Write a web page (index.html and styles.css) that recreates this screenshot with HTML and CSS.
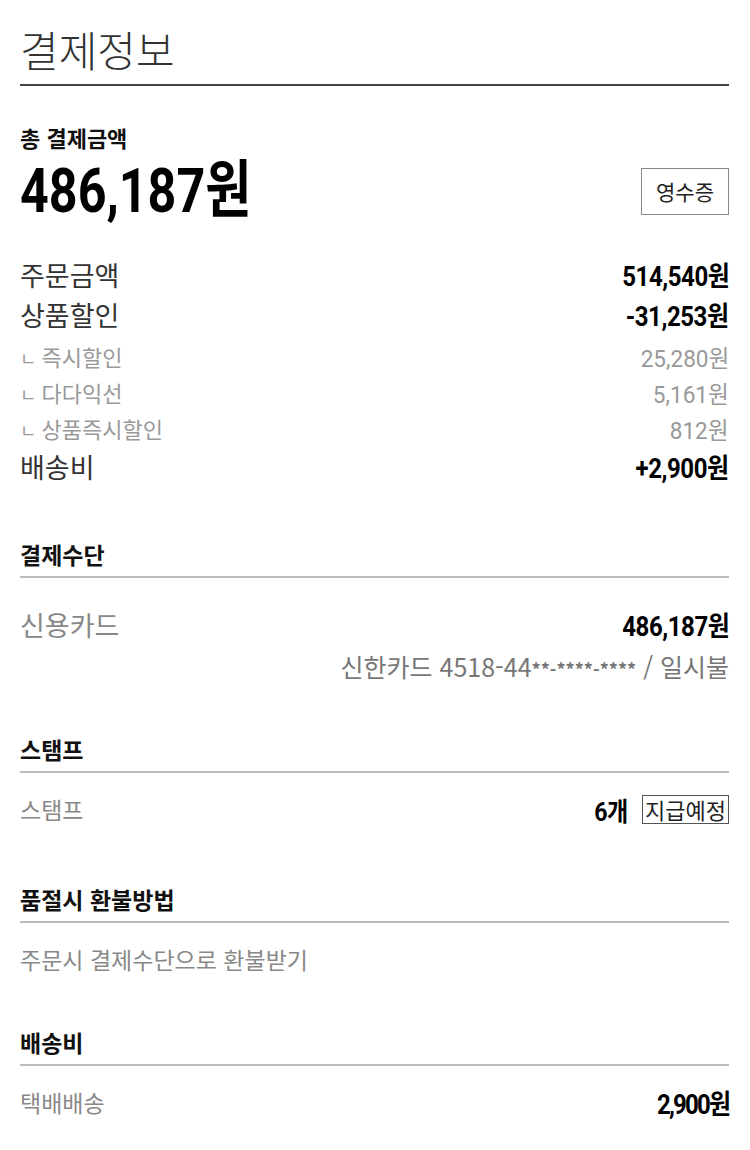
FILE: index.html
```html
<!DOCTYPE html>
<html lang="ko">
<head>
    <meta charset="UTF-8">
    <meta name="viewport" content="width=device-width, initial-scale=1.0">
    <title>결제정보</title>
    <link rel="stylesheet" href="styles.css">
</head>
<body>
    <div class="container">
        <h1 class="page-title">결제정보</h1>

        <div class="total">
            <div class="total-label">총 결제금액</div>
            <div class="total-row">
                <span class="total-amount num">486,187원</span>
                <button class="receipt-btn">영수증</button>
            </div>
        </div>

        <div class="price-list">
            <div class="price-row">
                <span>주문금액</span>
                <span class="num value">514,540원</span>
            </div>
            <div class="price-row">
                <span>상품할인</span>
                <span class="num value">-31,253원</span>
            </div>
            <div class="sub-list">
                <div class="price-row sub">
                    <span><span class="corner">ㄴ</span>즉시할인</span>
                    <span class="num">25,280원</span>
                </div>
                <div class="price-row sub">
                    <span><span class="corner">ㄴ</span>다다익선</span>
                    <span class="num">5,161원</span>
                </div>
                <div class="price-row sub">
                    <span><span class="corner">ㄴ</span>상품즉시할인</span>
                    <span class="num">812원</span>
                </div>
            </div>
            <div class="price-row">
                <span>배송비</span>
                <span class="num value">+2,900원</span>
            </div>
        </div>

        <div class="section section-first">
            <h2 class="section-title">결제수단</h2>
            <div class="section-body card-body">
                <div class="info-row large">
                    <span class="muted">신용카드</span>
                    <span class="num value">486,187원</span>
                </div>
                <div class="card-detail">신한카드 4518-44<span class="mask">**-****-****</span> / 일시불</div>
            </div>
        </div>

        <div class="section section-stamp">
            <h2 class="section-title">스탬프</h2>
            <div class="section-body">
                <div class="info-row">
                    <span class="muted">스탬프</span>
                    <span class="stamp-value">
                        <span class="num value">6개</span>
                        <span class="stamp-tag">지급예정</span>
                    </span>
                </div>
            </div>
        </div>

        <div class="section section-refund">
            <h2 class="section-title">품절시 환불방법</h2>
            <div class="section-body">
                <div class="info-row">
                    <span class="muted">주문시 결제수단으로 환불받기</span>
                </div>
            </div>
        </div>

        <div class="section section-last">
            <h2 class="section-title">배송비</h2>
            <div class="section-body">
                <div class="info-row">
                    <span class="muted">택배배송</span>
                    <span class="num value tight">2,900원</span>
                </div>
            </div>
        </div>
    </div>
</body>
</html>
```

FILE: styles.css
```css
body {
    margin: 0;
    padding: 0 21px 0 20px;
    background-color: #fff;
    font-family: "Noto Sans CJK KR", "Noto Sans", sans-serif;
    color: #333;
}
.container {
    padding-bottom: 30px;
}
/* narrow numerals, squeezed toward the right edge */
.num {
    display: inline-block;
    font-family: Roboto, "Noto Sans CJK KR", sans-serif;
    letter-spacing: -0.5px;
    transform: scaleX(0.89);
    transform-origin: right center;
}
.page-title {
    margin: 0;
    padding: 24px 0 10px;
    font-size: 42px;
    line-height: 50px;
    font-weight: 300;
    color: #333;
    border-bottom: 2px solid #444;
}
.total {
    padding-top: 37px;
}
.total-label {
    font-size: 22px;
    line-height: 28px;
    font-weight: bold;
    color: #111;
}
.total-row {
    display: flex;
    justify-content: space-between;
    align-items: center;
    margin-top: 10px;
    height: 60px;
}
.total-amount {
    font-size: 62px;
    line-height: 60px;
    font-weight: bold;
    color: #000;
    letter-spacing: 0;
    transform: scaleX(0.81);
    transform-origin: left center;
}
.receipt-btn {
    width: 88px;
    height: 47px;
    border: 1.5px solid #888;
    background-color: #fff;
    font-family: "Noto Sans CJK KR", sans-serif;
    font-size: 21px;
    color: #222;
    padding: 0;
}
.price-list {
    margin-top: 33px;
}
.price-row {
    display: flex;
    justify-content: space-between;
    align-items: center;
    height: 40px;
    font-size: 27px;
    color: #333;
}
.value {
    font-size: 27px;
    font-weight: bold;
    color: #000;
}
.tight {
    letter-spacing: -2px;
}
.sub-list {
    margin-top: 4px;
}
.price-row.sub {
    height: 36px;
    font-size: 22px;
    color: #999;
}
.price-row.sub .num {
    font-size: 24px;
    letter-spacing: 0;
    transform: scaleX(0.94);
}
.corner {
    font-size: 18px;
    margin-right: 5px;
}
.section {
    margin-top: 52px;
}
.section-first {
    margin-top: 54px;
}
.section-stamp {
    margin-top: 49px;
}
.section-refund {
    margin-top: 56px;
}
.section-last {
    margin-top: 49px;
}
.section-title {
    margin: 0;
    padding-bottom: 8px;
    font-size: 23px;
    line-height: 28px;
    font-weight: bold;
    color: #111;
    border-bottom: 2px solid #bbb;
}
.section-body {
    padding-top: 16px;
}
.card-body {
    padding-top: 26px;
}
.info-row {
    display: flex;
    justify-content: space-between;
    align-items: center;
    height: 40px;
    font-size: 23px;
}
.info-row.large {
    font-size: 27px;
}
.muted {
    color: #888;
}
.card-detail {
    margin-top: 5px;
    text-align: right;
    font-size: 25px;
    line-height: 34px;
    color: #777;
}
.mask {
    font-size: 18px;
    font-weight: bold;
}
.stamp-value {
    display: flex;
    align-items: center;
    gap: 14px;
}
.stamp-value .value {
    font-size: 26px;
}
.stamp-tag {
    border: 1px solid #555;
    padding: 0 2px;
    font-size: 22px;
    line-height: 27px;
    color: #222;
}
```
